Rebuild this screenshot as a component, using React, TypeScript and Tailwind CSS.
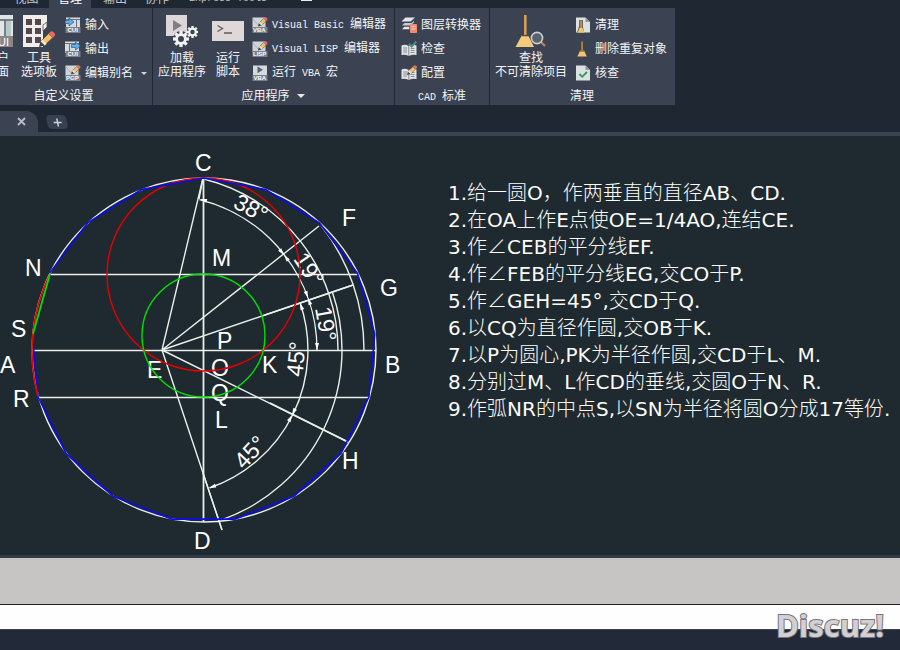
import React from "react";

type IconProps = { className?: string };

/* ---------- icons ---------- */

function Pencil({ x, y, s = 1 }: { x: number; y: number; s?: number }) {
  return (
    <g transform={`translate(${x} ${y}) scale(${s})`}>
      <path d="M0 10 L1 6.4 L3.6 9 Z" fill="#3a3f4a" />
      <path d="M1 6.4 L6 1.6 L8.6 4.2 L3.6 9 Z" fill="#f3c268" stroke="#3a3f4a" strokeWidth=".5" />
      <path d="M1 6.4 L2.2 5.3 L4.8 7.9 L3.6 9 Z" fill="#f6e3cf" />
      <path d="M6 1.6 L7.2 0.4 Q8 -0.2 9 0.7 L9.6 1.3 Q10.4 2.2 9.7 3.1 L8.6 4.2 Z" fill="#ef6a5e" />
    </g>
  );
}

function Tag({ text, x = 1 }: { text: string; x?: number }) {
  return (
    <>
      <rect x="0.5" y="10" width="15" height="6" fill="#7b7f88" />
      <text x={x} y="15.4" fill="#fff" fontSize="6" fontWeight="700" fontFamily="Liberation Sans, sans-serif">
        {text}
      </text>
    </>
  );
}

function Svg16({ children }: { children: React.ReactNode }) {
  return (
    <svg viewBox="0 0 16 16" className="size-4 shrink-0" aria-hidden="true">
      {children}
    </svg>
  );
}

function Svg32({ children }: { children: React.ReactNode }) {
  return (
    <svg viewBox="0 0 32 32" className="size-8 shrink-0" aria-hidden="true">
      {children}
    </svg>
  );
}

const CuiIn = () => (
  <Svg16>
    <path d="M1 0.5H15V12H1Z" fill="#d5dade" />
    <path d="M1 2.5H15M11.5 3V10" stroke="#69717c" fill="none" />
    <path d="M0 3.5H4V1L9 5L4 9V6.5H0Z" fill="#5cb0ee" stroke="#274563" strokeWidth=".6" />
    <Tag text="CUI" x={2.5} />
  </Svg16>
);

const CuiOut = () => (
  <Svg16>
    <path d="M0 0.5H14V12H0Z" fill="#d5dade" />
    <path d="M0 2.5H14M4.5 3V10" stroke="#69717c" fill="none" />
    <path d="M6.5 3.5H10.5V1L15.6 5L10.5 9V6.5H6.5Z" fill="#5cb0ee" stroke="#274563" strokeWidth=".6" />
    <Tag text="CUI" x={2.5} />
  </Svg16>
);

const EditDoc = ({ tag, x = 1 }: { tag: string; x?: number }) => (
  <Svg16>
    <rect x="0.5" y="0.5" width="13" height="11" fill="#cfd5d8" />
    <path d="M1 2L7 9" stroke="#a5adb2" />
    <Tag text={tag} x={x} />
    <Pencil x={6} y={0} s={0.95} />
  </Svg16>
);

const VbaMacro = () => (
  <Svg16>
    <rect x="1" y="0.5" width="14" height="11" fill="#d5dade" />
    <path d="M5.5 1.5L11 4.8L5.5 8.2Z" fill="#5c6370" />
    <Tag text="VBA" x={1.4} />
  </Svg16>
);

const LayerTranslate = () => (
  <Svg16>
    <path d="M4.5 0.5H14L9.5 4.6H0.5Z" fill="#e4e6e8" />
    <path d="M1 8.4L3.4 6H10.6L13 3.8V5.4L9.6 8.4Z" fill="#c8ccd0" />
    <path d="M1 12.2L3.4 9.8H8.4V12.2Z" fill="#e4e6e8" />
    <rect x="9" y="7" width="7" height="9" rx="0.8" fill="#f08a70" />
    <path d="M10.5 9.5H14.5M10.5 13L12 11.5L13 12.5L14.5 11" stroke="#fbe1d8" fill="none" strokeWidth=".9" />
  </Svg16>
);

const Book = () => (
  <>
    <path d="M0.5 4.5Q4 3 7.8 5Q11.5 3 15.5 4.5V14Q11.5 13 7.8 15Q4 13 0.5 14Z" fill="#e0e3e4" />
    <path d="M7.8 5V15M2.3 7H6M2.3 9H6M2.3 11H6M9.7 7.5H13.5M9.7 9.5H13.5M9.7 11.5H13.5" stroke="#7d858c" strokeWidth=".9" />
  </>
);

const CheckBook = () => (
  <Svg16>
    <Book />
    <path d="M8 2.8L10.7 5.6L15.3 0.6" stroke="#4a8f83" strokeWidth="2" fill="none" />
  </Svg16>
);

const ConfigBook = () => (
  <Svg16>
    <Book />
    <Pencil x={6} y={0} />
  </Svg16>
);

const Page = () => (
  <>
    <path d="M1 0.5H10.5L15 5V15.5H1Z" fill="#dde1e2" />
    <path d="M10.5 0.5V5H15Z" fill="#8e969c" />
  </>
);

const PurgeIcon = () => (
  <Svg16>
    <Page />
    <path d="M4.2 3H7.8V9L9 15.5H2L4.2 9Z" fill="#474d57" />
    <rect x="5.2" y="3.4" width="1.6" height="7" fill="#d79a45" />
    <path d="M4.6 10.5H7.4L9.4 15.7H2.6Z" fill="#f3c56c" />
  </Svg16>
);

const OverkillIcon = () => (
  <Svg16>
    <rect x="6.4" y="0.5" width="1.3" height="9" fill="#d79a45" />
    <path d="M5.2 9.5H9L11.8 15.5H2.4Z" fill="#f3c56c" />
    <path d="M5 10H9" stroke="#6f5130" />
  </Svg16>
);

const AuditIcon = () => (
  <Svg16>
    <Page />
    <path d="M4.4 9L7.2 11.8L12 7" stroke="#319a54" strokeWidth="1.8" fill="none" />
  </Svg16>
);

const UserInterfaceIcon = () => (
  <Svg32>
    <rect width="32" height="32" fill="#e2e5e6" />
    <path d="M0 5H32M24 5V22" stroke="#56606b" strokeWidth="1.5" />
    <rect x="25" y="6" width="5" height="15" fill="#b7c9c9" />
    <rect y="21" width="32" height="11" fill="#8a8688" />
    <text x="9" y="31" fontSize="11" fill="#fff" fontFamily="Liberation Sans, sans-serif">
      CUI
    </text>
  </Svg32>
);

const ToolPaletteIcon = () => (
  <Svg32>
    <path d="M0 0H24V8L20 13V32H0Z" fill="#f0eeec" />
    {[4, 13, 22].map((y) =>
      [3, 12].map((x) => <rect key={`${x}-${y}`} x={x} y={y} width="6" height="6" fill="#54484a" />),
    )}
    <path d="M20 10L24 7V12L20 16Z" fill="#f0eeec" stroke="#4a4f5a" strokeWidth=".8" />
    <Pencil x={16} y={16} s={1.6} />
  </Svg32>
);

function Gear({ cx, cy, r }: { cx: number; cy: number; r: number }) {
  return (
    <g>
      {[0, 45, 90, 135].map((a) => (
        <rect
          key={a}
          x={cx - r * 0.2}
          y={cy - r}
          width={r * 0.4}
          height={r * 2}
          fill="#f2f2f2"
          transform={`rotate(${a} ${cx} ${cy})`}
        />
      ))}
      <circle cx={cx} cy={cy} r={r * 0.55} fill="#3b4352" stroke="#f2f2f2" strokeWidth={r * 0.36} />
    </g>
  );
}

const LoadAppIcon = () => (
  <Svg32>
    <rect width="21" height="21" fill="#dcd6d8" />
    <path d="M7 5L16 10.5L7 16Z" fill="#7d7f84" />
    <circle cx="15" cy="24" r="8" fill="#3b4352" />
    <Gear cx={26.5} cy={17} r={6} />
    <Gear cx={15} cy={24} r={8} />
  </Svg32>
);

const ScriptIcon = () => (
  <Svg32>
    <rect y="6" width="32" height="20" fill="#dfd8d8" />
    <path d="M5.5 10.5L10.5 13.5L5.5 16.5M12 18H20" stroke="#5d5a60" strokeWidth="1.3" fill="none" />
  </Svg32>
);

const FindIcon = () => (
  <Svg32>
    <rect x="9" y="0" width="2.6" height="21" fill="#d79f55" />
    <path d="M7 20H13L19 32H0.5Z" fill="#f5cb7b" />
    <path d="M6.5 20.6H14" stroke="#5c4a3a" strokeWidth="1.4" />
    <path d="M25.5 26.5L30 31" stroke="#b58758" strokeWidth="2.2" />
    <circle cx="22" cy="23" r="5.6" fill="#59626c" stroke="#c9ced1" strokeWidth="1.6" />
  </Svg32>
);

/* ---------- ribbon ---------- */

const Mono = ({ children }: { children: React.ReactNode }) => (
  <span className="whitespace-pre font-['Liberation_Mono',monospace] text-[10px]">{children}</span>
);

function BigButton({ icon, lines, className = "" }: { icon: React.ReactNode; lines: string[] } & IconProps) {
  return (
    <button type="button" className={`flex shrink-0 flex-col items-center gap-1 ${className}`}>
      {icon}
      <span className="flex flex-col items-center leading-[14px]">
        {lines.map((l) => (
          <span key={l}>{l}</span>
        ))}
      </span>
    </button>
  );
}

function SmallButton({ icon, children, menu }: { icon: React.ReactNode; children: React.ReactNode; menu?: boolean }) {
  return (
    <button type="button" className="flex h-4 items-center gap-1 leading-4">
      {icon}
      <span>{children}</span>
      {menu && <span className="ml-1 border-x-[3px] border-t-[3px] border-x-transparent border-t-[#d5d8dc]" />}
    </button>
  );
}

function Panel({ title, className, children }: { title: React.ReactNode; className: string; children: React.ReactNode }) {
  return (
    <section className={`flex shrink-0 flex-col bg-[#3b4353] pt-[7px] ${className}`}>
      <div className="flex h-[72px] gap-2">{children}</div>
      <h2 className="flex h-[18px] items-center justify-center gap-[7px] pr-[6px]">{title}</h2>
    </section>
  );
}

const Column = ({ children }: { children: React.ReactNode }) => (
  <div className="flex flex-col gap-2 pt-[2px]">{children}</div>
);

function Ribbon() {
  return (
    <div className="flex gap-px text-[12px] text-[#f3f4f5]">
      <Panel title="自定义设置" className="-ml-[22px] w-[174px] pl-[3px]">
        <BigButton icon={<UserInterfaceIcon />} lines={["用户", "界面"]} />
        <BigButton icon={<ToolPaletteIcon />} lines={["工具", "选项板"]} />
        <Column>
          <SmallButton icon={<CuiIn />}>输入</SmallButton>
          <SmallButton icon={<CuiOut />}>输出</SmallButton>
          <SmallButton icon={<EditDoc tag="PGP" />} menu>
            编辑别名
          </SmallButton>
        </Column>
      </Panel>
      <Panel
        title={
          <>
            应用程序
            <span className="border-x-4 border-t-4 border-x-transparent border-t-[#e5e7e9]" />
          </>
        }
        className="w-[241px] pl-[5px]"
      >
        <div className="flex gap-[6px]">
          <BigButton icon={<LoadAppIcon />} lines={["加载", "应用程序"]} />
          <BigButton icon={<ScriptIcon />} lines={["运行", "脚本"]} />
        </div>
        <Column>
          <SmallButton icon={<EditDoc tag="VBA" />}>
            <Mono>Visual Basic </Mono>编辑器
          </SmallButton>
          <SmallButton icon={<EditDoc tag="LISP" />}>
            <Mono>Visual LISP </Mono>编辑器
          </SmallButton>
          <SmallButton icon={<VbaMacro />}>
            运行<Mono> VBA </Mono>宏
          </SmallButton>
        </Column>
      </Panel>
      <Panel
        title={
          <span>
            <Mono>CAD </Mono>标准
          </span>
        }
        className="w-[94px] pl-[6px]"
      >
        <Column>
          <SmallButton icon={<LayerTranslate />}>图层转换器</SmallButton>
          <SmallButton icon={<CheckBook />}>检查</SmallButton>
          <SmallButton icon={<ConfigBook />}>配置</SmallButton>
        </Column>
      </Panel>
      <Panel title="清理" className="w-[185px] pl-[5px]">
        <BigButton icon={<FindIcon />} lines={["查找", "不可清除项目"]} />
        <Column>
          <SmallButton icon={<PurgeIcon />}>清理</SmallButton>
          <SmallButton icon={<OverkillIcon />}>删除重复对象</SmallButton>
          <SmallButton icon={<AuditIcon />}>核查</SmallButton>
        </Column>
      </Panel>
    </div>
  );
}

function RibbonTabs() {
  return (
    <nav className="flex h-2 items-end overflow-hidden pl-1 text-[12px] leading-[14px] text-[#c3c7cc]">
      <button type="button" className="w-[45px] pb-[2px]">视图</button>
      <button type="button" className="w-[42px] bg-[#3b4353] pb-[2px] text-white">管理</button>
      <button type="button" className="w-12 pb-[2px]">输出</button>
      <button type="button" className="w-9 pb-[2px]">协作</button>
      <button type="button" className="ml-[14px] pb-[2px]">
        <Mono>Express Tools</Mono>
      </button>
      <span className="mb-[7px] ml-[34px] h-1 w-[11px] bg-[#e8eaeb]" />
    </nav>
  );
}

function FileTabs() {
  return (
    <div className="flex h-[31px] items-end border-b-4 border-[#3b4353]">
      <div className="flex h-[21px] w-[38px] items-center justify-center rounded-tr-xl bg-[#3b4353] pl-1">
        <button type="button" aria-label="关闭" className="size-[9px]">
          <svg viewBox="0 0 9 9" className="block size-[9px]">
            <path d="M1 1L8 8M8 1L1 8" stroke="#b9bcc2" strokeWidth="1.8" />
          </svg>
        </button>
      </div>
      <button
        type="button"
        aria-label="新图形"
        className="mb-[3px] ml-[9px] flex h-[14px] w-5 skew-x-12 items-center justify-center rounded-[4px] bg-[#374152]"
      >
        <svg viewBox="0 0 9 9" className="size-[9px]">
          <path d="M4.5 0.5V8.5M0.5 4.5H8.5" stroke="#d0d3d7" strokeWidth="1.5" />
        </svg>
      </button>
    </div>
  );
}

/* ---------- drawing ---------- */

const O = { x: 203.5, y: 350 };
const R = 172;
const E = { x: 162, y: 350 };

function vertex(k: number) {
  const a = (k * 2 * Math.PI) / 17;
  return `${(O.x - R * Math.sin(a)).toFixed(1)},${(O.y - R * Math.cos(a)).toFixed(1)}`;
}

// Arc centred on E, from angle a to angle b in degrees measured anticlockwise from EB.
function arc(r: number, a: number, b: number) {
  const p = (d: number) => {
    const t = (d * Math.PI) / 180;
    return `${(E.x + r * Math.cos(t)).toFixed(1)} ${(E.y - r * Math.sin(t)).toFixed(1)}`;
  };
  return `M${p(a)}A${r} ${r} 0 0 1 ${p(b)}`;
}

// Sixteen sides of the 17-gon, from S round to N; the side NS is drawn in green.
const blueVertices = [4, 5, 6, 7, 8, 9, 10, 11, 12, 13, 14, 15, 16, 17, 18, 19, 20].map(vertex).join(" ");

const labels: [string, number, number][] = [
  ["C", 195, 171],
  ["F", 342, 226],
  ["M", 212, 266],
  ["N", 25, 276],
  ["G", 380, 296],
  ["S", 11, 337],
  ["A", 0, 373],
  ["P", 217, 349],
  ["B", 385, 373],
  ["E", 147, 378],
  ["O", 211, 376],
  ["K", 262, 373],
  ["R", 13, 407],
  ["Q", 211, 401],
  ["L", 215, 428],
  ["H", 342, 469],
  ["D", 194, 549],
];

const angles: [string, number, number, number][] = [
  ["38°", 251, 208, 28],
  ["19°", 309, 269, 56],
  ["19°", 326, 324, 80],
  ["45°", 296, 359, -84],
  ["45°", 250, 452, -47],
];

const arrows: [number, number, number][] = [
  [200, 199, 195],
  [284, 255, 52],
  [284, 255, 232],
  [308, 298, 70],
  [308, 298, 250],
  [317, 350, 90],
  [300, 303, 250],
  [292, 415, 117],
  [292, 415, 297],
  [209, 488, 161],
];

function Drawing() {
  return (
    <svg viewBox="0 136 410 419" className="h-[419px] w-[410px] shrink-0" role="img" aria-label="圆的17等份作图">
      <g fill="none" stroke="#e9efe9" strokeWidth="1.4">
        <circle cx={O.x + 0.5} cy={O.y} r={R} />
        <path d="M51 274.5H358M33 350.5H376M39 397.5H368" />
        <path d="M203.5 178V522" strokeWidth="1.8" />
        <path d="M203 178L162 350M162 350L319 226M162 350L353 285M162 350L348 442M162 350L222 530" />
        <path d="M203 178L199 199M262 316L353 285M270 403L348 442M203 473L222 530" />
        <path d={arc(155, 76, 0)} />
        <path d={arc(146, 19, -71)} />
        <path d={arc(176, 76, 0)} />
        <path d={arc(180, 19, -70)} />
        <path d={arc(202, 38, 0)} />
      </g>
      <g fill="#fff">
        {arrows.map(([x, y, a], i) => (
          <path key={i} d="M0 0L-7 -2V2Z" transform={`translate(${x} ${y}) rotate(${a})`} />
        ))}
      </g>
      <g fill="#fff" fontSize="23" fontFamily="'Liberation Sans', Arial, sans-serif">
        {labels.map(([t, x, y]) => (
          <text key={t} x={x} y={y}>
            {t}
          </text>
        ))}
        {angles.map(([t, x, y, a], i) => (
          <text key={i} textAnchor="middle" y="8" transform={`translate(${x} ${y}) rotate(${a})`}>
            {t}
          </text>
        ))}
      </g>
      <g fill="none" strokeWidth="1.4">
        <circle cx={O.x} cy="274.5" r="96.5" stroke="#e60000" />
        <circle cx={O.x} cy="335.5" r="61.5" stroke="#00e000" />
        <polyline points={blueVertices} stroke="#0b0bf0" strokeWidth="1.6" />
        <path d="M50 274A172 172 0 0 0 38 396" stroke="#e60000" strokeWidth="1.6" />
        <path d="M50 274L33 334" stroke="#00e000" strokeWidth="1.8" />
      </g>
    </svg>
  );
}

const steps = [
  "1.给一圆O，作两垂直的直径AB、CD.",
  "2.在OA上作E点使OE=1/4AO,连结CE.",
  "3.作∠CEB的平分线EF.",
  "4.作∠FEB的平分线EG,交CO于P.",
  "5.作∠GEH=45°,交CD于Q.",
  "6.以CQ为直径作圆,交OB于K.",
  "7.以P为圆心,PK为半径作圆,交CD于L、M.",
  "8.分别过M、L作CD的垂线,交圆O于N、R.",
  "9.作弧NR的中点S,以SN为半径将圆O分成17等份.",
];

// Latin runs are set in the regular weight, Chinese runs in the light one.
function Step({ text }: { text: string }) {
  return (
    <li>
      {text.split(/([\x20-\x7e°]+)/).map((run, i) =>
        i % 2 ? (
          <span key={i} className="font-normal">
            {run}
          </span>
        ) : (
          run
        ),
      )}
    </li>
  );
}

export default function App() {
  return (
    <div className="relative flex min-h-screen flex-col overflow-hidden bg-[#1f2733] font-['Liberation_Sans','Noto_Sans_CJK_SC',sans-serif]">
      <header>
        <RibbonTabs />
        <Ribbon />
        <FileTabs />
      </header>
      <main className="flex flex-1 bg-[#1f2930]">
        <Drawing />
        <ol className="ml-[38px] mt-11 whitespace-nowrap font-['DejaVu_Sans','Noto_Sans_CJK_SC',sans-serif] text-[20px] font-light leading-[27px] text-[#fbfcf8]">
          {steps.map((s) => (
            <Step key={s} text={s} />
          ))}
        </ol>
      </main>
      <footer>
        <div className="h-[50px] border-b border-t-[3px] border-b-[#1c2230] border-t-[#323c48] bg-[#c7c5c4]" />
        <input aria-label="命令" className="block h-6 w-full bg-[#fdfefd] px-2 text-sm outline-none" />
        <div className="h-[21px] border-t border-[#3b4353] bg-[#222939]" />
      </footer>
      <div className="absolute bottom-[5px] right-4 font-['Open_Sans','Noto_Sans',sans-serif] text-[31px] font-bold leading-10 text-[#d3d0d3] [paint-order:stroke_fill] [-webkit-text-stroke:2px_#77757c]">
        Discuz!
      </div>
    </div>
  );
}
